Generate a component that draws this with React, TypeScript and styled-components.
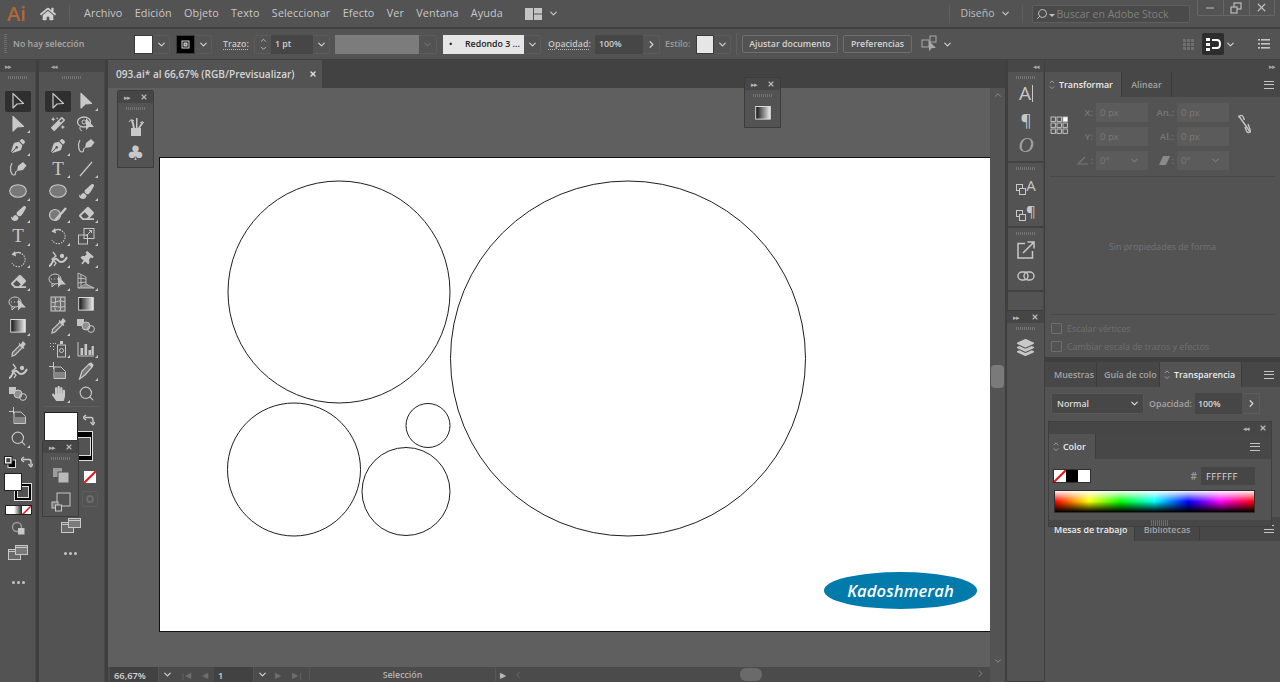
import React, { useId } from 'react';
import styled, { createGlobalStyle } from 'styled-components';
import { ChevronDown, ChevronUp, ChevronRight, ChevronLeft, Search, Minus, X } from 'lucide-react';
import { FaHome, FaPenNib, FaMagic, FaEraser, FaThumbtack, FaLayerGroup, FaPaintBrush, FaHandPaper } from 'react-icons/fa';

const UI = `"Open Sans", "Noto Sans", "Liberation Sans", sans-serif`;

const Global = createGlobalStyle`
  html, body { margin: 0; padding: 0; height: 100%; background: #424242; overflow: hidden; }
  * { box-sizing: border-box; }
  #root { width: 1280px; height: 682px; }
`;

const Page = styled.div`
  width: 1280px; height: 682px; display: flex; flex-direction: column; overflow: hidden;
  font-family: ${UI}; color: #c9c9c9; background: #3f3f3f;
`;

/* ---------- menu bar ---------- */
const MenuBar = styled.header`
  height: 27px; flex: none; display: flex; align-items: center; background: #535353; position: relative;
`;
const AiLogo = styled.span`
  width: 32px; padding-left: 7px; flex: none; font-size: 20px; font-weight: 600; color: #b0683a; line-height: 1; font-family: "Open Sans", sans-serif;
`;
const HomeSlot = styled.span`width: 37px; flex: none; display: flex; justify-content: center; color: #d0d0d0; font-size: 16px; padding-right: 6px;`;
const VDivider = styled.span<{ $h?: number; $mx?: number }>`
  width: 1px; height: ${p => p.$h ?? 18}px; margin: 0 ${p => p.$mx ?? 0}px; background: #5f5f5f; flex: none;
`;
const MenuList = styled.nav`display: flex; gap: 12.3px; margin: -2px 0 0 14px; font-size: 10.8px; color: #c8c8c8; letter-spacing: .1px;`;
const LayoutSwitch = styled.span`display: flex; align-items: center; gap: 6px; margin-left: 22px; color: #c8c8c8;`;
const TopRight = styled.div`margin-left: auto; display: flex; align-items: center; height: 100%;`;
const WorkspaceName = styled.span`font-size: 10.5px; color: #bdbdbd; margin: -2px 5px 0 11px;`;
const WorkspaceChevron = styled.span`display: flex; color: #c8c8c8; margin-right: 11px;`;
const SearchBox = styled.div`
  width: 158px; height: 18px; margin: 0 7px 0 9px; background: #4a4a4a; border: 1px solid #5e5e5e; border-radius: 2px;
  display: flex; align-items: center; padding-left: 3px; font-size: 10.5px; color: #808080; white-space: nowrap;
`;
const MirroredSearch = styled(Search)`transform: scaleX(-1); flex: none;`;
const SearchCaret = styled.span`
  width: 0; height: 0; border: 3px solid transparent; border-top: 3px solid #c0c0c0; border-bottom: 0; margin: 3px 2px 0 1px; flex: none;
`;
const WindowButtons = styled.div`
  align-self: flex-start; display: flex; height: 16px; margin-right: 5px; border: 1px solid #666; border-top: 0; border-radius: 0 0 2px 2px;
`;
const WindowButton = styled.span`
  width: 25.5px; display: flex; align-items: center; justify-content: center; color: #bdbdbd;
  & + & { border-left: 1px solid #666; }
`;

/* ---------- control bar ---------- */
const ControlBar = styled.section`
  height: 30px; margin-top: 2px; flex: none; display: flex; align-items: center; background: #535353; position: relative; padding-left: 4px;
`;
const Grip = styled.span`
  width: 3px; height: 20px; flex: none;
  background: repeating-linear-gradient(to bottom, #6d6d6d 0 1px, transparent 1px 2px);
`;
const SelectionLabel = styled.span`font-size: 8.8px; font-weight: 600; color: #a8a8a8; width: 121px; margin-left: 6px; flex: none;`;
const Swatch = styled.span<{ $bg?: string; $w?: number; $ml?: number }>`
  display: flex; align-items: center; justify-content: center; flex: none; margin-left: ${p => p.$ml ?? 0}px;
  width: ${p => p.$w ?? 19}px; height: 19px; background: ${p => p.$bg ?? '#fff'}; border: 1px solid #3b3b3b;
`;
const Drop = styled.span<{ $w?: number; $dim?: boolean }>`
  display: flex; align-items: center; justify-content: center; flex: none;
  width: ${p => p.$w ?? 17}px; height: 19px; border: 1px solid #5c5c5c; border-left: 0; border-radius: 0 2px 2px 0;
  color: ${p => p.$dim ? '#6c6c6c' : '#d0d0d0'};
`;
const ControlLabel = styled.span<{ $ml: number; $w: number; $dim?: boolean }>`
  margin-left: ${p => p.$ml}px; width: ${p => p.$w}px; flex: none; font-size: 8.8px; font-weight: 600;
  color: ${p => p.$dim ? '#9a9a9a' : '#c6c6c6'};
  text-decoration: ${p => p.$dim ? 'none' : 'underline dotted #bbb 1px'}; text-underline-offset: 2px;
`;
const Field = styled.span<{ $w: number; $ml?: number; $bg?: string; $color?: string }>`
  display: flex; align-items: center; flex: none; height: 19px; padding-left: 4px; font-size: 8.8px; font-weight: 600; white-space: nowrap;
  margin-left: ${p => p.$ml ?? 0}px; width: ${p => p.$w}px; background: ${p => p.$bg ?? '#464646'}; color: ${p => p.$color ?? '#d0d0d0'};
`;
const StrokeBullet = styled.span`width: 18px; padding-left: 2px; flex: none;`;
const Spinner = styled.span`
  width: 17px; height: 19px; margin-left: 5px; flex: none; display: flex; flex-direction: column; align-items: center; justify-content: center;
  color: #c8c8c8; border: 1px solid #5c5c5c; border-right: 0; border-radius: 2px 0 0 2px;
`;
const ControlButton = styled.span<{ $w: number; $ml: number }>`
  width: ${p => p.$w}px; margin-left: ${p => p.$ml}px; height: 18px; flex: none; display: flex; align-items: center; justify-content: center;
  border: 1px solid #6e6e6e; border-radius: 2px; font-size: 8.8px; font-weight: 600; color: #d4d4d4;
`;
const IconSlot = styled.span<{ $ml: number; $w?: number }>`
  display: flex; flex: none; margin-left: ${p => p.$ml}px; color: #d0d0d0; ${p => p.$w ? `width: ${p.$w}px;` : ''}
`;
const SnapButton = styled.span`
  width: 22px; height: 22px; background: #2d2d2d; border-radius: 2px; display: flex; align-items: center; justify-content: center; margin-left: 7px;
`;
const ControlRight = styled.div`margin-left: auto; display: flex; align-items: center; padding-right: 10px;`;

/* ---------- workspace ---------- */
const Workspace = styled.main`flex: 1; min-height: 0; margin-top: 1px; display: flex; background: #3f3f3f;`;

const DockStrip = styled.div<{ $align?: string; $bg?: string; $pr?: number }>`
  height: 12px; flex: none; display: flex; align-items: center; justify-content: ${p => p.$align ?? 'flex-start'};
  padding: 0 ${p => p.$pr ?? 5}px 0 5px; background: ${p => p.$bg ?? '#474747'}; color: #a8a8a8; font-size: 7px; letter-spacing: -1px; line-height: 1;
`;
const ToolGrip = styled.div`
  width: 20px; height: 3px; margin: 4px auto 0; flex: none;
  background: repeating-linear-gradient(to right, #747474 0 1px, transparent 1px 2px);
`;
const ToolBar = styled.aside<{ $w: number }>`
  width: ${p => p.$w}px; flex: none; margin-right: 3px; display: flex; flex-direction: column; background: #535353; position: relative;
  box-shadow: inset -1px 0 #484848;
`;
const ToolGrid = styled.div<{ $cols: number }>`
  display: grid; grid-template-columns: repeat(${p => p.$cols}, 28px); grid-auto-rows: 22.5px; justify-content: center; margin-top: 11px;
`;
const ToolButton = styled.span<{ $active?: boolean; $fly?: boolean }>`
  position: relative; display: flex; align-items: center; justify-content: center; color: #c8c8c8;
  &::before {
    content: ''; position: absolute; z-index: 0; left: 1px; right: 1px; top: 1px; bottom: 1px; border-radius: 2px;
    background: ${p => p.$active ? '#2f2f2f' : 'transparent'};
  }
  & > * { position: relative; z-index: 1; }
  &::after {
    content: ''; display: ${p => p.$fly ? 'block' : 'none'}; position: absolute; right: 2px; bottom: 2px;
    border-left: 3px solid transparent; border-bottom: 3px solid #c8c8c8;
  }
`;
const TiltedPin = styled(FaThumbtack)`transform: rotate(40deg);`;
const HRule = styled.div`height: 1px; margin: 1px 5px 0; background: #5d5d5d; flex: none;`;
const CenteredSlot = styled.div<{ $mt?: number; $h?: number; $pr?: number }>`
  display: flex; align-items: center; justify-content: center; flex: none; color: #c8c8c8;
  margin-top: ${p => p.$mt ?? 0}px; height: ${p => p.$h ?? 22}px; padding-right: ${p => p.$pr ?? 0}px;
`;
const Dots = styled.span`
  display: flex; gap: 2px;
  & > i { width: 3px; height: 3px; border-radius: 50%; background: #c4c4c4; display: block; }
`;
const MiniRow = styled.div`display: flex; align-items: center; justify-content: space-between; padding: 0 3px 0 4px; height: 23px; flex: none; color: #c8c8c8;`;
const FillStack = styled.div<{ $w: number; $h: number; $ml: number; $mt?: number }>`
  position: relative; flex: none; width: ${p => p.$w}px; height: ${p => p.$h}px; margin-left: ${p => p.$ml}px; margin-top: ${p => p.$mt ?? 0}px;
`;
const StrokeBox = styled.span<{ $s: number; $b: number }>`
  position: absolute; right: 0; bottom: 0; width: ${p => p.$s}px; height: ${p => p.$s + (p.$s > 20 ? 7 : 0)}px;
  background: #000; border: 1px solid #ddd; display: flex; align-items: center; justify-content: center;
  &::after { content: ''; width: ${p => p.$s - p.$b * 2}px; height: ${p => p.$s - p.$b * 2}px; border: 1px solid #ddd; background: #535353; }
`;
const FillBox = styled.span<{ $s: number }>`
  position: absolute; left: 0; top: 0; width: ${p => p.$s}px; height: ${p => p.$s}px; background: #fff; border: 1px solid #222;
`;
const ColorModes = styled.div`
  display: flex; width: 27px; height: 10px; margin: 4px 0 0 5px; flex: none; border: 1px solid #222; overflow: hidden;
`;
const ModeCell = styled.span<{ $bg: string }>`flex: 1; background: ${p => p.$bg};`;
const SwapRow = styled.div`position: absolute; right: 10px; top: 349px; color: #c8c8c8;`;
const NoneSlot = styled.span<{ $top: number; $dim?: boolean }>`
  position: absolute; left: 43px; top: ${p => p.$top}px; width: 16px; height: 16px; display: flex; align-items: center; justify-content: center;
  border: 1px solid ${p => p.$dim ? '#5e5e5e' : 'transparent'}; border-radius: 2px; color: #6c6c6c;
`;
const DimRing = styled.span`width: 8px; height: 8px; border-radius: 50%; border: 2px solid #6c6c6c; display: block;`;
const Float = styled.div<{ $left: number; $top: number; $w?: number; $h: number; $flush?: boolean }>`
  position: absolute; left: ${p => p.$left}px; top: ${p => p.$top}px; width: ${p => p.$w ?? 37}px; height: ${p => p.$h}px; z-index: 5;
  background: #535353; border: 1px solid #3c3c3c; border-radius: 2px 2px 0 0; display: flex; flex-direction: column; align-items: center;
  ${p => p.$flush ? 'border-left: 0; border-right: 0;' : ''}
`;
const FloatHead = styled.div`
  width: 100%; height: 12px; flex: none; background: #464646; display: flex; align-items: center; justify-content: space-between; padding: 0 5px 0 6px;
  color: #b8b8b8; font-size: 7px; letter-spacing: -1px;
`;
const FloatIcon = styled.span<{ $mt: number }>`margin-top: ${p => p.$mt}px; display: flex; color: #c8c8c8; flex: none;`;
const ClubGlyph = styled.span`font-size: 20px; line-height: 22px; color: #c8c8c8; font-family: "DejaVu Sans", sans-serif;`;

/* ---------- document ---------- */
const DocArea = styled.section`flex: 1; min-width: 0; display: flex; flex-direction: column; position: relative; margin-right: 3px;`;
const DocTabs = styled.div`height: 28px; flex: none; display: flex; background: #424242;`;
const DocTab = styled.div`
  width: 214px; background: #535353; display: flex; align-items: center; justify-content: space-between; padding: 0 5px 0 8px;
  font-size: 10.1px; font-weight: 600; color: #d6d6d6; white-space: nowrap;
`;
const DocBody = styled.div`flex: 1; min-height: 0; display: flex;`;
const Canvas = styled.div`flex: 1; min-width: 0; background: #5f5f5f; position: relative; overflow: hidden;`;
const Artboard = styled.div`
  position: absolute; left: 51px; top: 69px; width: 860px; height: 475px; background: #fff; border: 1px solid #111;
`;
const ArtSvg = styled.svg`display: block; position: absolute; left: 0; top: 0;`;
const LogoBadge = styled.div`
  position: absolute; left: 664px; top: 414px; width: 153px; height: 36.5px; border-radius: 50%; background: #007bab;
  display: flex; align-items: center; justify-content: center; color: #fff; font: italic 600 16.6px "Open Sans", sans-serif; letter-spacing: .1px;
`;
const VScroll = styled.div`
  width: 15px; flex: none; background: #535353; display: flex; flex-direction: column; align-items: center; justify-content: space-between;
  color: #999; position: relative; padding: 2px 0 1px;
`;
const VThumb = styled.span`
  position: absolute; left: 1px; right: 1px; top: 277px; height: 23px; background: #7a7a7a; border-radius: 4px;
`;
const StatusBar = styled.footer`
  height: 15px; flex: none; display: flex; align-items: center; background: #4b4b4b; color: #8a8a8a; padding-left: 2px; position: relative;
`;
const StatusField = styled.span<{ $w: number; $ml?: number }>`
  width: ${p => p.$w}px; margin-left: ${p => p.$ml ?? 0}px; height: 15px; flex: none; background: #424242; color: #d4d4d4;
  display: flex; align-items: center; padding: 1px 0 0 4px; font-size: 9.3px; font-weight: 600;
`;
const StatusDrop = styled.span`width: 17px; height: 15px; flex: none; display: flex; align-items: center; justify-content: center; color: #d4d4d4; border-left: 1px solid #555;`;
const StatusNav = styled.span<{ $w: number }>`width: ${p => p.$w}px; flex: none; display: flex; align-items: center; justify-content: space-around; font-size: 8px; color: #6f6f6f;`;
const StatusPlay = styled.span`color: #b8b8b8;`;
const StatusTool = styled.span`
  width: 187px; flex: none; margin-left: 1px; padding-top: 1px; text-align: center; font-size: 8.8px; font-weight: 600; color: #b4b4b4; border-left: 1px solid #585858; border-right: 1px solid #585858;
`;
const StatusThumb = styled.span`position: absolute; left: 632px; top: 1px; width: 22px; height: 13px; background: #6a6a6a; border-radius: 6px;`;
const StatusEnd = styled.span`position: absolute; right: 19px; top: 1px; display: flex; color: #8a8a8a;`;
const StatusCorner = styled.span`position: absolute; right: 0; top: 0; width: 15px; height: 15px; background: #535353;`;

/* ---------- right dock ---------- */
const RightDock = styled.aside`width: 36px; flex: none; margin-right: 1px; display: flex; flex-direction: column; background: #535353; position: relative; box-shadow: inset -1px 0 #474747;`;
const DockGroup = styled.div<{ $h: number }>`
  height: ${p => p.$h}px; flex: none; display: flex; flex-direction: column; align-items: center; border-bottom: 2px solid #424242;
`;
const DockIcon = styled.span<{ $mt: number; $serif?: boolean; $size?: number; $dim?: boolean }>`
  margin-top: ${p => p.$mt}px; height: 20px; display: flex; align-items: center; justify-content: center; flex: none; color: ${p => p.$dim ? '#a4a4a4' : '#c8c8c8'};
  font-family: ${p => p.$serif ? '"Liberation Serif", serif' : UI}; font-size: ${p => p.$size ?? 18}px; line-height: 1;
`;
const TextCaret = styled.span`width: 1px; height: 17px; margin-left: 1px; background: #c8c8c8; display: block;`;
const CopyGlyph = styled.span`display: flex; align-items: flex-start; gap: 0; font-size: 15px; line-height: 1; color: #c8c8c8;`;
const CopySvg = styled.svg`margin-top: 6px;`;

/* ---------- panels ---------- */
const PanelColumn = styled.aside`width: 235px; flex: none; display: flex; flex-direction: column; background: #3f3f3f; position: relative;`;
const PanelGroup = styled.div<{ $h?: number; $mt?: number; $grow?: boolean }>`
  flex: ${p => p.$grow ? '1' : 'none'}; height: ${p => p.$h ? `${p.$h}px` : 'auto'}; margin-top: ${p => p.$mt ?? 0}px;
  background: #535353; display: flex; flex-direction: column;
`;
const TabRow = styled.div<{ $h?: number }>`
  height: ${p => p.$h ?? 25}px; flex: none; display: flex; align-items: stretch; background: #474747; position: relative; font-size: 8.9px; font-weight: 600;
`;
const Tab = styled.span<{ $w: number; $active?: boolean; $pl?: number }>`
  width: ${p => p.$w}px; flex: none; display: flex; align-items: center; gap: 4px; justify-content: ${p => p.$active || p.$pl ? 'flex-start' : 'center'};
  padding-left: ${p => p.$pl ?? (p.$active ? 4 : 0)}px; white-space: nowrap; overflow: hidden;
  background: ${p => p.$active ? '#535353' : 'transparent'}; color: ${p => p.$active ? '#ececec' : '#a4a4a4'};
  border-right: 1px solid #3c3c3c;
`;
const TabUpDown = styled.span`display: flex; flex-direction: column; gap: 2px; color: #a8a8a8; flex: none;`;
const Burger = styled.span<{ $right?: number }>`
  position: absolute; right: ${p => p.$right ?? 6}px; top: 50%; margin-top: -4px; width: 10px; height: 8px;
  border-top: 1px solid #c4c4c4; border-bottom: 1px solid #c4c4c4;
  &::after { content: ''; display: block; height: 1px; margin-top: 2.5px; background: #c4c4c4; }
`;
const TransformBody = styled.div`padding: 6px 5px 0 5px; position: relative; flex: 1; display: flex; flex-direction: column;`;
const FieldGrid = styled.div`
  display: grid; grid-template-columns: 43px 55px 26px 55px; row-gap: 5px; grid-auto-rows: 19px; align-items: center; font-size: 9.5px; font-weight: 600;
  color: #777; text-align: right;
`;
const Ghost = styled.span`
  height: 19px; background: #5b5b5b; color: #7a7a7a; font-size: 9.5px; font-weight: 400; padding-left: 4px; display: flex; align-items: center; justify-content: space-between; padding-right: 8px;
  margin-left: 3px;
`;
const AngleLabel = styled.span`display: flex; justify-content: flex-end; align-items: center; gap: 1px;`;
const AnchorPos = styled.span`position: absolute; left: 5px; top: 19px; display: flex;`;
const LinkPos = styled.span`position: absolute; left: 192px; top: 17px; display: flex;`;
const Rule = styled.div<{ $mt: number }>`height: 1px; background: #484848; margin: ${p => p.$mt}px 0 0; flex: none;`;
const Empty = styled.div`height: 137px; padding-top: 2px; display: flex; align-items: center; justify-content: center; flex: none; font-size: 8.9px; color: #737373;`;
const CheckRow = styled.label<{ $mt: number }>`
  display: flex; align-items: center; gap: 5px; font-size: 8.9px; color: #6f6f6f; margin: ${p => p.$mt}px 0 0 1px; height: 12px; flex: none;
`;
const CheckBox = styled.span`width: 11px; height: 11px; border: 1px solid #6e6e6e; border-radius: 1px; flex: none;`;
const BlendRow = styled.div`display: flex; align-items: center; padding: 6px 0 0 6px; font-size: 8.8px; font-weight: 600;`;
const BlendSelect = styled.span`
  width: 93px; height: 21px; background: #474747; border: 1px solid #585858; border-radius: 2px; display: flex; align-items: center; justify-content: space-between;
  padding: 0 3px 0 5px; color: #dcdcdc;
`;
const BlendLabel = styled.span`margin-left: 5px; width: 46px; color: #a4a4a4;`;
const BlendValue = styled.span`width: 47px; height: 21px; background: #464646; color: #d8d8d8; display: flex; align-items: center; padding-left: 3px;`;
const BlendStep = styled.span`width: 17px; height: 21px; margin-left: 1px; border: 1px solid #5c5c5c; border-left: 0; display: flex; align-items: center; justify-content: center; color: #d8d8d8;`;
const ColorFloat = styled.div`
  position: absolute; left: 3px; top: 361px; width: 224px; height: 106px; z-index: 6; background: #535353; border: 1px solid #3f3f3f; display: flex; flex-direction: column;
`;
const ColorHead = styled.div`
  height: 12px; flex: none; background: #464646; display: flex; align-items: center; justify-content: flex-end; gap: 10px; padding-right: 4px; color: #b8b8b8; font-size: 7px; letter-spacing: -1px;
`;
const ColorTools = styled.div`display: flex; align-items: center; justify-content: space-between; padding: 5px 16px 0 4px; flex: none; height: 29px;`;
const MiniSwatches = styled.span`display: flex; border: 1px solid #303030; height: 14px;`;
const MiniSwatch = styled.span<{ $bg: string }>`width: 12px; height: 12px; background: ${p => p.$bg}; display: block;`;
const NoFillSvg = styled.svg`display: block;`;
const HexGroup = styled.span`display: flex; align-items: center; gap: 4px; font-size: 10px; font-weight: 600; color: #9a9a9a;`;
const HexField = styled.span`width: 54px; height: 18px; background: #464646; color: #d8d8d8; display: flex; align-items: center; padding-left: 5px; font-size: 9.5px; font-weight: 400; letter-spacing: .4px;`;
const Spectrum = styled.div`
  margin: 2px 16px 0 5px; height: 23px; flex: none; border: 1px solid #2f2f2f; position: relative;
  background:
    linear-gradient(to bottom, rgba(255,255,255,.95) 0%, rgba(255,255,255,0) 50%, rgba(0,0,0,0) 50%, #000 100%),
    linear-gradient(to right, #f00 0%, #ff0 17%, #0f0 33%, #0ff 50%, #00f 67%, #f0f 83%, #f00 100%);
`;
const SizeGrip = styled.div`
  margin-top: auto; height: 6px; flex: none; background: #474747; display: flex; justify-content: center;
  &::after { content: ''; width: 18px; background: repeating-linear-gradient(to right, #6d6d6d 0 1px, transparent 1px 2px); }
`;

/* ---------- drawings ---------- */
const C = '#c8c8c8';

const Arrow = ({ filled }: { filled?: boolean }) => (
  <svg width="16" height="18" viewBox="0 0 16 18">
    <path d="M3 1.5 L3 16 L7 12 L13.5 11.5 Z" fill={filled ? C : 'none'} stroke={C} strokeWidth="1.2" strokeLinejoin="round" />
  </svg>
);
const Lasso = () => (
  <svg width="20" height="18" viewBox="0 0 20 18">
    <ellipse cx="8" cy="7" rx="6.5" ry="5" fill="none" stroke={C} strokeWidth="1.3" />
    <circle cx="8" cy="7" r="2" fill="none" stroke={C} />
    <path d="M4 12 q-1 3 2 4" fill="none" stroke={C} />
    <path d="M10 3 L10 15 L13 12 L18 12 Z" fill={C} />
  </svg>
);
const CurvPen = () => (
  <svg width="20" height="18" viewBox="0 0 20 18">
    <path d="M9 11 L10 6 L15 2 L18.5 5.5 L15 10 Z" fill={C} />
    <path d="M4 3 C1 8 3 15 6 15 C9 15 6 11 9 11" fill="none" stroke={C} strokeWidth="1.2" />
  </svg>
);
const Line = () => <svg width="16" height="16" viewBox="0 0 16 16"><path d="M2 15 L14 1" stroke={C} strokeWidth="1.2" /></svg>;
const Ell = () => <svg width="20" height="16" viewBox="0 0 20 16"><ellipse cx="10" cy="8" rx="8.3" ry="6.3" fill="#797979" stroke={C} strokeWidth="1.1" /></svg>;
const Shaper = () => (
  <svg width="20" height="16" viewBox="0 0 20 16">
    <circle cx="7" cy="9" r="5.5" fill="#797979" stroke={C} strokeWidth="1.2" />
    <path d="M7 14.5 L18 2" stroke={C} strokeWidth="2.4" />
  </svg>
);
const Rotate = () => (
  <svg width="18" height="18" viewBox="0 0 18 18">
    <path d="M5 4 A7 7 0 1 1 3 13" fill="none" stroke={C} strokeWidth="1.1" strokeDasharray="1.5 1.2" />
    <path d="M5 4 A7 7 0 0 1 12 3" fill="none" stroke={C} strokeWidth="1.3" />
    <path d="M6 1 L2.5 4.5 L7 6.5 Z" fill={C} />
  </svg>
);
const Scale = () => (
  <svg width="18" height="18" viewBox="0 0 18 18" fill="none" stroke={C}>
    <rect x="7" y="1.5" width="10" height="10" />
    <rect x="1.5" y="8" width="9" height="9" />
    <path d="M9 9 L14.5 3.5 M12 3.5 h2.5 v2.5" />
  </svg>
);
const Warp = () => (
  <svg width="20" height="16" viewBox="0 0 20 16" fill="none" stroke={C} strokeWidth="1.3">
    <path d="M1 15 C4 15 4 9 7 8 C10 7 10 11 13 11 C16 11 18 8 19 6" strokeWidth="2" />
    <path d="M5 1 L8 5 L4 8 L8 12 L6 15" />
    <circle cx="14" cy="5" r="1.5" fill={C} />
  </svg>
);
const ShapeBuilder = () => (
  <svg width="20" height="18" viewBox="0 0 20 18" fill="none" stroke={C}>
    <ellipse cx="7" cy="7" rx="6" ry="5" />
    <path d="M3 7 h1 M6 7 h1 M9 7 h1" />
    <path d="M4 11.5 L4 15 L7 12" />
    <path d="M10 4 L10 15.5 L13 12.5 L18 12.5 Z" fill={C} stroke="none" />
  </svg>
);
const PerspGrid = () => (
  <svg width="18" height="18" viewBox="0 0 18 18" fill="none" stroke={C} strokeWidth=".9">
    <path d="M1 1 L9 5 L9 12 L1 16 Z M1 6 L9 7 M1 11 L9 10 M4 2.5 L4 14.5" />
    <path d="M9 12 L17 16 L1 16" fill="#8b8b8b" />
  </svg>
);
const Mesh = () => (
  <svg width="16" height="16" viewBox="0 0 16 16" fill="none" stroke={C}>
    <rect x="1" y="1" width="14" height="14" fill="#6a6a6a" />
    <path d="M1 6 C5 8 8 3 15 6 M1 11 C5 9 10 13 15 10 M5 1 C7 6 3 10 6 15 M11 1 C9 6 12 10 10 15" />
  </svg>
);
const Gradient = ({ size = 16 }: { size?: number }) => {
  const id = useId();
  return (
    <svg width={size} height={size * .85} viewBox="0 0 16 14">
      <defs>
        <linearGradient id={id}><stop offset="0" stopColor="#111" /><stop offset="1" stopColor="#eee" /></linearGradient>
      </defs>
      <rect x=".5" y=".5" width="15" height="13" fill={`url(#${id})`} stroke="#ddd" />
    </svg>
  );
};
const Dropper = () => (
  <svg width="16" height="18" viewBox="0 0 16 18" fill="none" stroke={C} strokeWidth="1.2">
    <path d="M2 16 L2.5 12.5 L10 5 L12.5 7.5 L5 15 Z" fill="#6d6d6d" />
    <path d="M9 3.5 L14 8.5 M11 5 L13 2 L15 4 L12.5 7" fill={C} />
  </svg>
);
const Blend = () => (
  <svg width="18" height="14" viewBox="0 0 18 14">
    <rect x="0" y="0" width="7" height="7" fill="#c4c4c4" />
    <circle cx="9" cy="7" r="4" fill="#8f8f8f" stroke={C} />
    <circle cx="14" cy="10" r="3.4" fill="none" stroke={C} />
  </svg>
);
const Spray = () => (
  <svg width="18" height="18" viewBox="0 0 18 18" fill={C}>
    <path d="M1 3h1v1H1zM4 3h1v1H4zM1 6h1v1H1zM4 6h1v1H4zM6 3h1v1H6zM4 9h1v1H4z" />
    <rect x="11" y="1" width="3" height="3" />
    <rect x="8.5" y="5" width="8" height="12" fill="none" stroke={C} />
    <circle cx="12.5" cy="10.5" r="2" fill="none" stroke={C} />
  </svg>
);
const Graph = () => (
  <svg width="18" height="16" viewBox="0 0 18 16" fill={C}>
    <path d="M1 1v14h16" fill="none" stroke={C} />
    <rect x="3.5" y="7" width="2.6" height="7" />
    <rect x="7.5" y="3" width="2.6" height="11" />
    <rect x="11.5" y="9" width="2.6" height="5" />
    <rect x="14.6" y="5" width="2.2" height="9" />
  </svg>
);
const ArtboardTool = () => (
  <svg width="18" height="18" viewBox="0 0 18 18" fill="none" stroke={C}>
    <path d="M0 4.5h5 M4.5 0v7" />
    <path d="M5 5 H12 L16.5 9.5 V16.5 H5 Z" />
    <path d="M6 10 H16 V16 H6 Z" fill="#848484" stroke="none" />
  </svg>
);
const Slice = () => (
  <svg width="16" height="18" viewBox="0 0 16 18" fill="none" stroke={C} strokeWidth="1.2">
    <path d="M1.5 17 L4 9 L11 2 L14 5 L7 13 Z" fill="#777" />
    <path d="M11 2 L13 1 L15 3 L14 5" fill={C} />
  </svg>
);
const FillDefault = () => (
  <svg width="12" height="12" viewBox="0 0 12 12">
    <rect x="4" y="4" width="7.5" height="7.5" fill="#000" stroke="#ddd" />
    <rect x=".5" y=".5" width="7.5" height="7.5" fill="#fff" stroke="#222" />
    <rect x="2" y="2" width="4.5" height="4.5" fill="#444" stroke="#ddd" strokeWidth=".7" />
  </svg>
);
const Swap = () => (
  <svg width="12" height="12" viewBox="0 0 12 12" fill="none" stroke={C} strokeWidth="1.4">
    <path d="M1.5 3.5 H8 Q10 3.5 10 6 V9" />
    <path d="M0 3.5 L3 1 M0 3.5 L3 6" />
    <path d="M10 11 L7.5 8 M10 11 L12 8" />
  </svg>
);
const NoFill = ({ s = 12 }: { s?: number }) => (
  <NoFillSvg width={s} height={s} viewBox="0 0 12 12">
    <rect width="12" height="12" fill="#fff" />
    <path d="M0 12 L12 0" stroke="#e11" strokeWidth="2" />
  </NoFillSvg>
);
const DrawMode = () => (
  <svg width="15" height="14" viewBox="0 0 15 14">
    <circle cx="6" cy="6" r="4.5" fill="none" stroke="#9b9b9b" strokeWidth="1.4" />
    <rect x="7" y="7" width="6.5" height="6.5" fill="#c8c8c8" />
  </svg>
);
const Screens = () => (
  <svg width="20" height="15" viewBox="0 0 20 15" fill="none" stroke={C}>
    <rect x=".5" y="4.5" width="12" height="10" fill="#6a6a6a" />
    <path d="M1 6.5h11" strokeWidth="1" />
    <rect x="7.5" y=".5" width="12" height="9" fill="#7a7a7a" />
    <path d="M8 2.5h11" />
  </svg>
);
const Brushes = () => (
  <svg width="18" height="20" viewBox="0 0 18 20" fill={C}>
    <rect x="4" y="11" width="10" height="8" />
    <path d="M6 11 L4 3 h2 L8 11 M9 11 V1 h1.5 V11 M11 11 L15 5 l1.5 1 L13 11" />
    <path d="M2 5 q2-4 5-1 M13 6 q3-3 4 0" stroke={C} fill="none" />
  </svg>
);
const FrontBack = () => (
  <svg width="18" height="18" viewBox="0 0 18 18" fill="#b9b9b9">
    <rect x="1" y="1" width="9" height="9" fill="#9c9c9c" />
    <rect x="6" y="5" width="11" height="11" stroke="#535353" />
  </svg>
);
const InsideOut = () => (
  <svg width="20" height="20" viewBox="0 0 20 20" fill="none" stroke={C}>
    <rect x="6" y="1" width="13" height="13" />
    <rect x="1" y="10" width="6" height="6" fill="#777" />
    <rect x="4.5" y="13" width="6" height="6" fill="#535353" />
  </svg>
);
const WorkspaceSwitch = () => (
  <svg width="17" height="12" viewBox="0 0 17 12" fill="#c4c4c4"><rect width="8" height="12" /><rect x="9" width="8" height="5.5" /><rect x="9" y="6.5" width="8" height="5.5" /></svg>
);
const RestoreIcon = () => (
  <svg width="12" height="12" viewBox="0 0 12 12" fill="none" stroke="#bdbdbd" strokeWidth="1.2">
    <rect x="4" y="1" width="7" height="6" /><rect x="1" y="5" width="6" height="6" fill="#535353" />
  </svg>
);
const SnapIcon = () => (
  <svg width="15" height="15" viewBox="0 0 15 15" fill="none">
    <path d="M0 1h4v3H0zM0 6h4v3H0zM0 11h4v3H0z" fill="#fff" />
    <path d="M6 3 H11 Q14 3 14 7 Q14 11 11 11 H6" stroke="#fff" strokeWidth="2" />
  </svg>
);
const GridDots = () => (
  <svg width="13" height="13" viewBox="0 0 13 13" fill="#6f6f6f">
    {[1, 5, 9].flatMap(x => [1, 5, 9].map(y => <rect key={`${x}-${y}`} x={x} y={y} width="3" height="3" />))}
  </svg>
);
const ListIcon = () => (
  <svg width="12" height="10" viewBox="0 0 12 10" fill="#c4c4c4">
    {[0, 4, 8].map(y => <g key={y}><rect y={y} width="2" height="1.6" /><rect x="3" y={y} width="9" height="1.6" /></g>)}
  </svg>
);
const IsolateIcon = () => (
  <svg width="18" height="18" viewBox="0 0 18 18" fill="none" stroke="#aaa">
    <rect x="1" y="5" width="7" height="7" /><rect x="9" y="1" width="6" height="6" />
    <path d="M8 6 L8 16 L11 13 L15 13 Z" fill="#aaa" stroke="none" />
  </svg>
);
const StrokeMini = () => (
  <svg width="9" height="9" viewBox="0 0 9 9" fill="none" stroke="#ddd"><rect x="1" y="1" width="7" height="7" /><rect x="3" y="3" width="3" height="3" fill="#777" /></svg>
);
const AnchorGrid = () => (
  <svg width="19" height="19" viewBox="0 0 19 19" fill="none" stroke="#c8c8c8" strokeWidth=".9">
    {[1, 7, 13].flatMap(x => [1, 7, 13].map(y => (
      <rect key={`${x}-${y}`} x={x} y={y} width="4.4" height="4.4" fill={x === 13 && y === 1 ? '#fff' : 'none'} />
    )))}
  </svg>
);
const ProportionLink = () => (
  <svg width="15" height="20" viewBox="0 0 15 20" fill="none" stroke="#c4c4c4" strokeWidth="1.4">
    <path d="M2.5 4 C1.5 1.5 5 .5 6 2.5 L7.5 6" />
    <path d="M8 13 L9.5 17 C10.5 19.5 14 18.5 13 15.5 L11 10" />
    <path d="M1.5 1.5 L13.5 18.5" />
  </svg>
);
const AngleIcon = () => (
  <svg width="12" height="9" viewBox="0 0 12 9" fill="none" stroke="#777" strokeWidth="1.1"><path d="M11 8 H1 L8 1" /></svg>
);
const ShearIcon = () => (
  <svg width="11" height="9" viewBox="0 0 11 9" fill="#8a8a8a"><path d="M4 0 H11 L7 9 H0 Z" /></svg>
);
const Export = () => (
  <svg width="18" height="18" viewBox="0 0 18 18" fill="none" stroke={C} strokeWidth="1.5">
    <path d="M8 2.5 H1 V17 H15.5 V10" />
    <path d="M6 12 L16.5 1.5 M10.5 1 H17 V7.5" />
  </svg>
);
const Links = () => (
  <svg width="18" height="10" viewBox="0 0 18 10" fill="none" stroke={C} strokeWidth="1.4">
    <rect x="1" y="1" width="10" height="8" rx="4" /><rect x="7" y="1" width="10" height="8" rx="4" />
  </svg>
);
const Tri = ({ up }: { up?: boolean }) => (
  <svg width="6" height="3.5" viewBox="0 0 6 4" fill="none" stroke="#a8a8a8" strokeWidth="1"><path d={up ? 'M.5 3.5 L3 1 L5.5 3.5' : 'M.5 .5 L3 3 L5.5 .5'} /></svg>
);
const Chev = ({ s = 11 }: { s?: number }) => <ChevronDown size={s} strokeWidth={2.6} />;
const TabSort = () => <TabUpDown><Tri up /><Tri /></TabUpDown>;
const Copy = () => (
  <CopySvg width="10" height="11" viewBox="0 0 10 11" fill="none" stroke={C}>
    <rect x=".5" y=".5" width="6" height="6" /><rect x="3.5" y="4.5" width="6" height="6" fill="#535353" />
  </CopySvg>
);
const Txt = () => (
  <svg width="20" height="20" viewBox="0 0 20 20">
    <text x="10" y="15.5" textAnchor="middle" fontFamily='"Liberation Serif", serif' fontSize="19" fill={C}>T</text>
  </svg>
);
const ZoomTool = () => <Search size={17} strokeWidth={1.6} />;

const wideTools: [React.ReactNode, boolean, boolean?][] = [
  [<Arrow key="a" />, false, true], [<Arrow key="b" filled />, true],
  [<FaMagic key="c" size={14} />, false], [<Lasso key="d" />, false],
  [<FaPenNib key="e" size={14} />, true], [<CurvPen key="f" />, false],
  [<Txt key="g" />, true], [<Line key="h" />, true],
  [<Ell key="i" />, false], [<FaPaintBrush key="j" size={15} />, true],
  [<Shaper key="k" />, true], [<FaEraser key="l" size={15} />, true],
  [<Rotate key="m" />, true], [<Scale key="n" />, true],
  [<Warp key="o" />, true], [<TiltedPin key="p" size={14} />, true],
  [<ShapeBuilder key="q" />, true], [<PerspGrid key="r" />, true],
  [<Mesh key="s" />, false], [<Gradient key="t" />, false],
  [<Dropper key="u" />, true], [<Blend key="v" />, false],
  [<Spray key="w" />, true], [<Graph key="x" />, true],
  [<ArtboardTool key="y" />, false], [<Slice key="z" />, true],
  [<FaHandPaper key="aa" size={15} />, true], [<ZoomTool key="ab" />, false],
];

const narrowTools: [React.ReactNode, boolean, boolean?][] = [
  [<Arrow key="a" />, false, true], [<Arrow key="b" filled />, true],
  [<FaPenNib key="c" size={14} />, true], [<CurvPen key="d" />, false],
  [<Ell key="e" />, true], [<FaPaintBrush key="f" size={15} />, true],
  [<Txt key="g" />, true], [<Rotate key="h" />, true],
  [<FaEraser key="i" size={15} />, true], [<ShapeBuilder key="j" />, false],
  [<Gradient key="k" />, true], [<Dropper key="l" />, false],
  [<Warp key="m" />, false], [<Blend key="n" />, false],
  [<ArtboardTool key="o" />, false], [<ZoomTool key="p" />, true],
];

const circles = [
  { cx: 179, cy: 134, r: 111 },
  { cx: 468, cy: 200.5, r: 177.5 },
  { cx: 134, cy: 311.5, r: 66.5 },
  { cx: 246, cy: 333.5, r: 44 },
  { cx: 268, cy: 267.5, r: 22 },
];

export default function App() {
  return (
    <Page>
      <Global />
      <MenuBar>
        <AiLogo>Ai</AiLogo>
        <HomeSlot><FaHome /></HomeSlot>
        <VDivider />
        <MenuList>
          {['Archivo', 'Edición', 'Objeto', 'Texto', 'Seleccionar', 'Efecto', 'Ver', 'Ventana', 'Ayuda'].map(m => <span key={m}>{m}</span>)}
        </MenuList>
        <LayoutSwitch><WorkspaceSwitch /><Chev /></LayoutSwitch>
        <TopRight>
          <VDivider />
          <WorkspaceName>Diseño</WorkspaceName>
          <WorkspaceChevron><Chev /></WorkspaceChevron>
          <VDivider />
          <SearchBox>
            <MirroredSearch size={12} strokeWidth={2} color="#c0c0c0" />
            <SearchCaret />
            <span>Buscar en Adobe Stock</span>
          </SearchBox>
          <WindowButtons>
            <WindowButton><Minus size={12} strokeWidth={2} /></WindowButton>
            <WindowButton><RestoreIcon /></WindowButton>
            <WindowButton><X size={13} strokeWidth={2.4} /></WindowButton>
          </WindowButtons>
        </TopRight>
      </MenuBar>

      <ControlBar>
        <Grip />
        <SelectionLabel>No hay selección</SelectionLabel>
        <Swatch /><Drop><Chev /></Drop>
        <Swatch $bg="#000" $ml={6}><StrokeMini /></Swatch>
        <Drop><Chev /></Drop>
        <ControlLabel $ml={11} $w={26}>Trazo:</ControlLabel>
        <Spinner><ChevronUp size={9} strokeWidth={2.4} /><ChevronDown size={9} strokeWidth={2.4} /></Spinner>
        <Field $w={42}>1 pt</Field>
        <Drop><Chev /></Drop>
        <Field $w={84} $ml={5} $bg="#7c7c7c" />
        <Drop $w={18} $dim><Chev /></Drop>
        <Field $w={81} $ml={6} $bg="#e6e6e6" $color="#222">
          <StrokeBullet>•</StrokeBullet>Redondo 3 ...
        </Field>
        <Drop $w={17}><Chev /></Drop>
        <ControlLabel $ml={7} $w={47}>Opacidad:</ControlLabel>
        <Field $w={48}>100%</Field>
        <Drop $w={17}><ChevronRight size={11} strokeWidth={2.6} /></Drop>
        <ControlLabel $ml={5} $w={31} $dim>Estilo:</ControlLabel>
        <Swatch $bg="#e6e6e6" $w={18} />
        <Drop><Chev /></Drop>
        <VDivider $h={22} $mx={5} />
        <ControlButton $w={96} $ml={0}>Ajustar documento</ControlButton>
        <ControlButton $w={69} $ml={5}>Preferencias</ControlButton>
        <IconSlot $ml={9}><IsolateIcon /></IconSlot>
        <IconSlot $ml={3}><Chev /></IconSlot>
        <ControlRight>
          <GridDots />
          <SnapButton><SnapIcon /></SnapButton>
          <IconSlot $ml={1} $w={33}><Chev /></IconSlot>
          <ListIcon />
        </ControlRight>
      </ControlBar>

      <Workspace>
        <ToolBar $w={36}>
          <DockStrip>▸▸</DockStrip>
          <ToolGrip />
          <ToolGrid $cols={1}>
            {narrowTools.map(([icon, fly, active], i) => <ToolButton key={i} $fly={fly} $active={active}>{icon}</ToolButton>)}
          </ToolGrid>
          <MiniRow><FillDefault /><Swap /></MiniRow>
          <FillStack $w={28} $h={28} $ml={4}>
            <StrokeBox $s={18} $b={4} />
            <FillBox $s={18} />
          </FillStack>
          <ColorModes>
            <ModeCell $bg="#fff" /><ModeCell $bg="linear-gradient(to right,#fff,#222)" />
            <NoFill s={9} />
          </ColorModes>
          <CenteredSlot $mt={2}><DrawMode /></CenteredSlot>
          <CenteredSlot $mt={2}><Screens /></CenteredSlot>
          <CenteredSlot $mt={8}><Dots><i /><i /><i /></Dots></CenteredSlot>
        </ToolBar>

        <ToolBar $w={66}>
          <DockStrip $align="flex-end" $pr={48}>◂◂</DockStrip>
          <ToolGrip />
          <ToolGrid $cols={2}>
            {wideTools.map(([icon, fly, active], i) => <ToolButton key={i} $fly={fly} $active={active}>{icon}</ToolButton>)}
          </ToolGrid>
          <HRule />
          <FillStack $w={49} $h={49} $ml={5} $mt={5}>
            <StrokeBox $s={23} $b={3} />
            <FillBox $s={34} />
          </FillStack>
          <SwapRow><Swap /></SwapRow>
          <NoneSlot $top={409}><NoFill /></NoneSlot>
          <NoneSlot $top={431} $dim><DimRing /></NoneSlot>
          <CenteredSlot $mt={56} $h={16} $pr={3}><Screens /></CenteredSlot>
          <CenteredSlot $mt={17} $h={6} $pr={3}><Dots><i /><i /><i /></Dots></CenteredSlot>
          <Float $left={3} $top={380} $h={77}>
            <FloatHead><span>▸▸</span><X size={8} strokeWidth={3.5} /></FloatHead>
            <ToolGrip />
            <FloatIcon $mt={7}><FrontBack /></FloatIcon>
            <FloatIcon $mt={7}><InsideOut /></FloatIcon>
          </Float>
        </ToolBar>

        <DocArea>
          <DocTabs>
            <DocTab>
              <span>093.ai* al 66,67% (RGB/Previsualizar)</span>
              <X size={8} strokeWidth={4} color="#e0e0e0" />
            </DocTab>
          </DocTabs>
          <DocBody>
            <Canvas>
              <Artboard>
                <ArtSvg width="840" height="473" viewBox="0 0 840 473">
                  {circles.map(c => <circle key={c.cx} {...c} fill="#fff" stroke="#1e1e1e" strokeWidth="1" />)}
                </ArtSvg>
                <LogoBadge>Kadoshmerah</LogoBadge>
              </Artboard>
            </Canvas>
            <VScroll>
              <ChevronUp size={10} strokeWidth={2} />
              <VThumb />
              <ChevronDown size={10} strokeWidth={2} />
            </VScroll>
          </DocBody>
          <StatusBar>
            <StatusField $w={48}>66,67%</StatusField>
            <StatusDrop><Chev /></StatusDrop>
            <StatusNav $w={39}><span>|◀</span><span>◀</span></StatusNav>
            <StatusField $w={39}>1</StatusField>
            <StatusDrop><Chev /></StatusDrop>
            <StatusNav $w={38}><span>▶</span><span>▶|</span></StatusNav>
            <StatusTool>Selección</StatusTool>
            <StatusNav $w={30}><StatusPlay>▶</StatusPlay><ChevronLeft size={10} /></StatusNav>
            <StatusThumb />
            <StatusEnd><ChevronRight size={11} /></StatusEnd>
            <StatusCorner />
          </StatusBar>
          <Float $left={9} $top={30} $h={78}>
            <FloatHead><span>▸▸</span><X size={8} strokeWidth={3.5} /></FloatHead>
            <ToolGrip />
            <FloatIcon $mt={7}><Brushes /></FloatIcon>
            <FloatIcon $mt={5}><ClubGlyph>♣</ClubGlyph></FloatIcon>
          </Float>
          <Float $left={636} $top={17} $h={51}>
            <FloatHead><span>▸▸</span><X size={8} strokeWidth={3.5} /></FloatHead>
            <ToolGrip />
            <FloatIcon $mt={9}><Gradient /></FloatIcon>
          </Float>
        </DocArea>

        <RightDock>
          <DockStrip $align="flex-end">◂◂</DockStrip>
          <DockGroup $h={91}>
            <ToolGrip />
            <DockIcon $mt={4} $size={19}>A<TextCaret /></DockIcon>
            <DockIcon $mt={6} $size={17}>¶</DockIcon>
            <DockIcon $mt={6} $serif $size={21} $dim><i>O</i></DockIcon>
          </DockGroup>
          <DockGroup $h={65}>
            <ToolGrip />
            <DockIcon $mt={6}><CopyGlyph><Copy />A</CopyGlyph></DockIcon>
            <DockIcon $mt={6}><CopyGlyph><Copy />¶</CopyGlyph></DockIcon>
          </DockGroup>
          <DockGroup $h={64}>
            <ToolGrip />
            <DockIcon $mt={5}><Export /></DockIcon>
            <DockIcon $mt={6}><Links /></DockIcon>
          </DockGroup>
          <Float $left={-1} $top={250} $w={37} $h={372} $flush>
            <FloatHead><span>▸▸</span><X size={8} strokeWidth={3.5} /></FloatHead>
            <ToolGrip />
            <FloatIcon $mt={9}><FaLayerGroup size={17} /></FloatIcon>
          </Float>
        </RightDock>

        <PanelColumn>
          <DockStrip $align="flex-end" $bg="#474747">▸▸</DockStrip>
          <PanelGroup $h={285}>
            <TabRow>
              <Tab $w={77} $active><TabSort />Transformar</Tab>
              <Tab $w={50}>Alinear</Tab>
              <Burger />
            </TabRow>
            <TransformBody>
              <FieldGrid>
                <span>X:</span><Ghost>0 px</Ghost><span>An.:</span><Ghost>0 px</Ghost>
                <span>Y:</span><Ghost>0 px</Ghost><span>Al.:</span><Ghost>0 px</Ghost>
                <AngleLabel><AngleIcon />:</AngleLabel><Ghost>0°<Chev /></Ghost>
                <AngleLabel><ShearIcon />:</AngleLabel><Ghost>0°<Chev /></Ghost>
              </FieldGrid>
              <AnchorPos><AnchorGrid /></AnchorPos>
              <LinkPos><ProportionLink /></LinkPos>
              <Rule $mt={6} />
              <Empty>Sin propiedades de forma</Empty>
              <Rule $mt={0} />
              <CheckRow $mt={7}><CheckBox />Escalar vértices</CheckRow>
              <CheckRow $mt={6}><CheckBox />Cambiar escala de trazos y efectos</CheckRow>
            </TransformBody>
          </PanelGroup>
          <PanelGroup $h={155} $mt={5}>
            <TabRow>
              <Tab $w={52} $pl={9}>Muestras</Tab>
              <Tab $w={63} $pl={7}>Guía de colo</Tab>
              <Tab $w={82} $active><TabSort />Transparencia</Tab>
              <Burger />
            </TabRow>
            <BlendRow>
              <BlendSelect>Normal<Chev /></BlendSelect>
              <BlendLabel>Opacidad:</BlendLabel>
              <BlendValue>100%</BlendValue>
              <BlendStep><ChevronRight size={11} strokeWidth={2.6} /></BlendStep>
            </BlendRow>
          </PanelGroup>
          <PanelGroup $grow>
            <TabRow $h={24}>
              <Tab $w={90} $active $pl={9}>Mesas de trabajo</Tab>
              <Tab $w={65}>Bibliotecas</Tab>
              <Burger />
            </TabRow>
          </PanelGroup>
          <ColorFloat>
            <ColorHead><span>◂◂</span><X size={8} strokeWidth={3.5} /></ColorHead>
            <TabRow>
              <Tab $w={47} $active><TabSort />Color</Tab>
              <Burger $right={11} />
            </TabRow>
            <ColorTools>
              <MiniSwatches><NoFill /><MiniSwatch $bg="#000" /><MiniSwatch $bg="#fff" /></MiniSwatches>
              <HexGroup>#<HexField>FFFFFF</HexField></HexGroup>
            </ColorTools>
            <Spectrum />
            <SizeGrip />
          </ColorFloat>
        </PanelColumn>
      </Workspace>
    </Page>
  );
}
